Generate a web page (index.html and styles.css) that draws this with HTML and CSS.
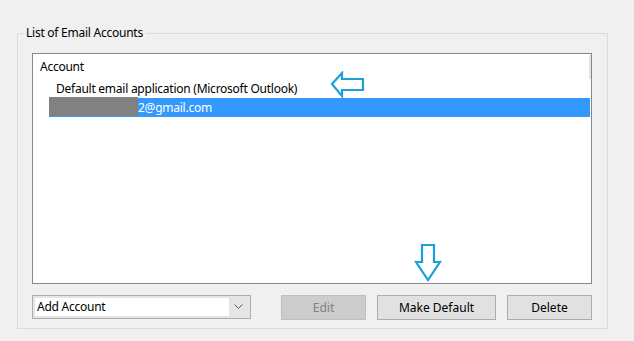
FILE: index.html
```html
<!DOCTYPE html>
<html lang="en">
<head><meta charset="UTF-8">
<title>Email Accounts</title>
<link rel="stylesheet" href="styles.css">
</head>
<body>

<fieldset class="group">
  <legend>List of Email Accounts</legend>

  <!-- account list -->
  <div class="list">
    <div class="list-head">Account</div>
    <div class="row">Default email application (Microsoft Outlook)</div>
    <div class="row selected"><span class="redact"></span>2@gmail.com</div>
    <div class="scroll-thumb"></div>

    <svg class="hint hint-left" width="36" height="28" viewBox="0 0 36 28">
      <path d="M2 13 L12 2 L12 8 L33 8 L33 19 L12 19 L12 25 Z" fill="none" stroke="#1ca0dc" stroke-width="2.2" stroke-linejoin="miter"/>
    </svg>
    <svg class="hint hint-down" width="28" height="40" viewBox="0 0 28 40">
      <path d="M8 2 L20 2 L20 19 L26 19 L14 37 L2 19 L8 19 Z" fill="none" stroke="#1ca0dc" stroke-width="2.2" stroke-linejoin="miter"/>
    </svg>
  </div>

  <!-- bottom controls -->
  <div class="controls">
    <div class="combo">
      <span class="combo-text">Add Account</span>
      <span class="combo-btn">
        <svg width="9" height="6" viewBox="0 0 9 6"><path d="M0.5 0.5 L4.5 4.5 L8.5 0.5" fill="none" stroke="#555" stroke-width="1"/></svg>
      </span>
    </div>
    <button class="btn btn-edit" disabled>Edit</button>
    <button class="btn btn-default">Make Default</button>
    <button class="btn btn-delete">Delete</button>
  </div>
</fieldset>

</body>
</html>
```

FILE: styles.css
```css
*,*::before,*::after{box-sizing:border-box}
body{
  margin:0;
  padding:25px 0 0 17px;
  background:#f0f0f0;
  font-family:'Noto Sans','Open Sans',sans-serif;
  font-size:12px;
  line-height:16px;
  letter-spacing:-0.25px;
  color:#000;
}

/* === GROUP BOX === */
.group{
  width:591px;
  min-width:0;
  margin:0;
  padding:12px 15px 8px 14px;
  border:1px solid #dcdcdc;
}
.group legend{
  padding:0 3px 0 2px;
  margin-left:-8px;
  line-height:16px;
}

/* === LIST === */
.list{
  position:relative;
  height:231px;
  background:#fff;
  border:1px solid #828790;
}
.list-head{padding:5px 7px 3px}
.row{
  height:20px;
  padding:3px 0 1px 23px;
  white-space:nowrap;
}
.row.selected{
  display:flex;
  align-items:center;
  height:19px;
  margin:0 1px 0 16px;
  padding:0;
  background:#3399ff;
  color:#fff;
}
.redact{
  width:89px;
  height:19px;
  margin-top:-2px;
  background:#818181;
  flex-shrink:0;
}
.scroll-thumb{
  position:absolute;
  right:0;top:1px;
  width:2px;height:24px;
  background:#e3e3e3;
}

/* arrows drawn over the screenshot */
.hint{position:absolute}
.hint-left{left:297px;top:17px}
.hint-down{left:381px;top:189px}

/* === CONTROLS === */
.controls{
  display:flex;
  align-items:flex-start;
  margin-top:11px;
}
.combo{
  display:flex;
  width:219px;
  height:24px;
  padding:2px;
  border:1px solid #adadad;
  background:#e5e5e5;
}
.combo-text{
  flex:1;
  padding:1px 2px;
  background:#fff;
}
.combo-btn{
  width:19px;
  display:flex;
  align-items:center;
  justify-content:center;
}
.btn{
  height:25px;
  margin-left:11px;
  padding:0;
  border:1px solid #adadad;
  background:#e1e1e1;
  font:inherit;
  color:#000;
}
.btn-edit{
  width:85px;
  margin-left:30px;
  background:#cccccc;
  border-color:#bfbfbf;
  color:#838383;
}
.btn-default{width:119px}
.btn-delete{width:85px}
```
